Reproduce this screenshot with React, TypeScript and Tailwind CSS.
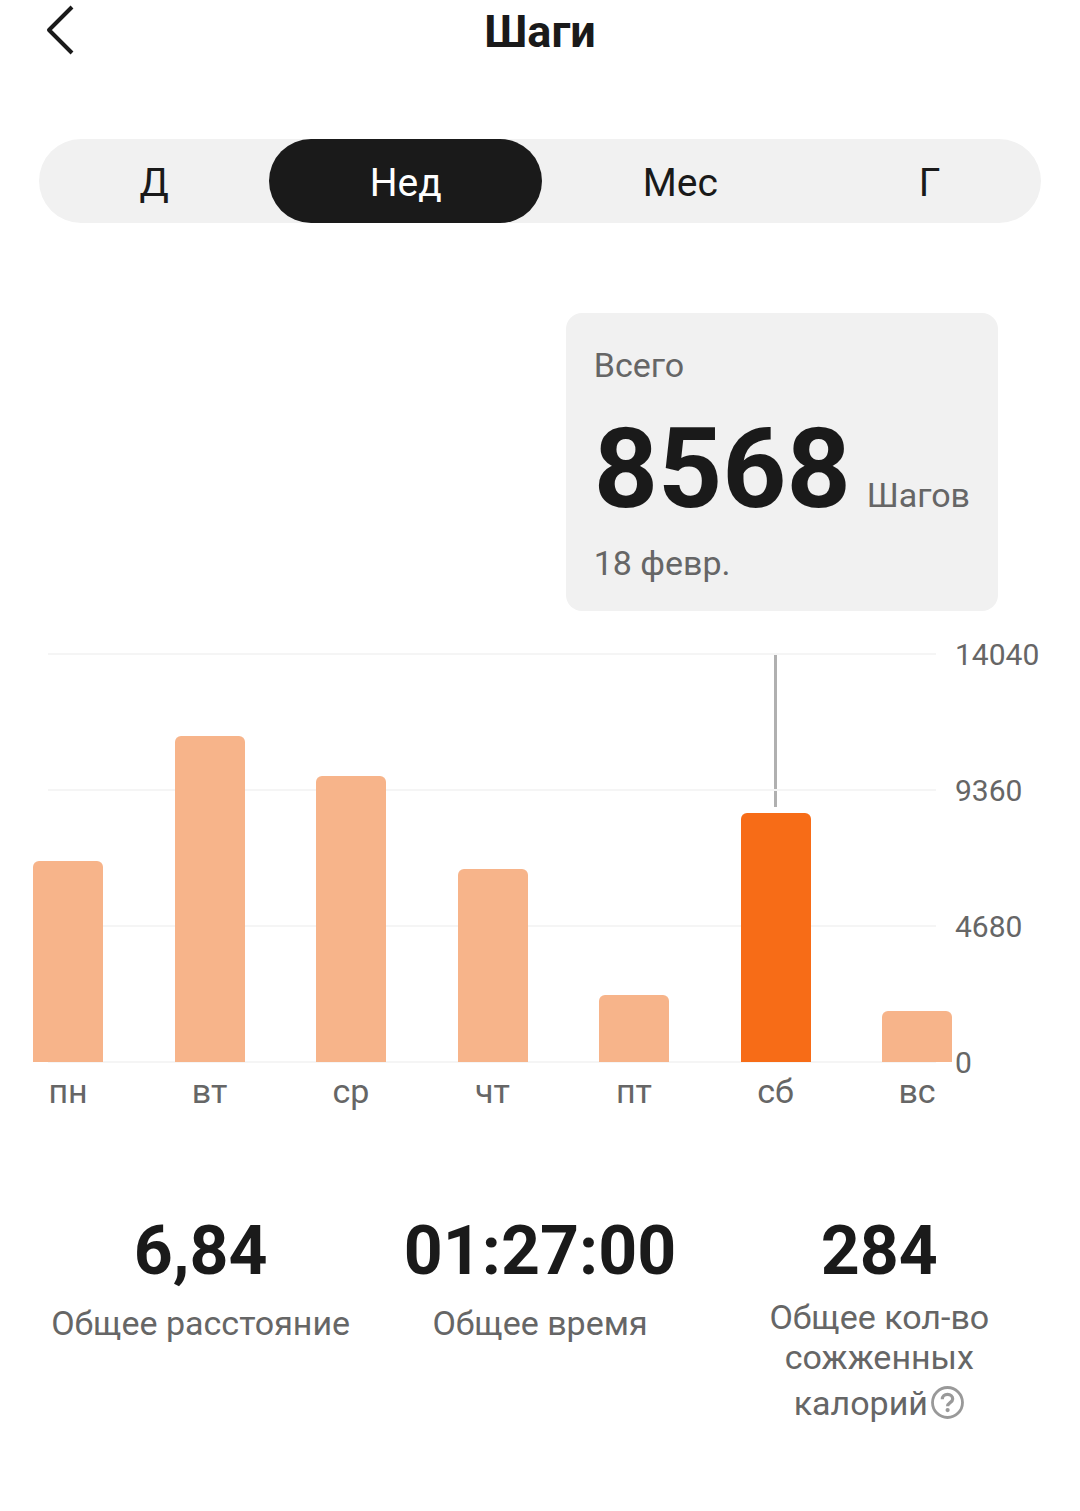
import { useState } from "react";

const MAX = 14040;
const axis = [14040, 9360, 4680, 0];
const tabs = ["Д", "Нед", "Мес", "Г"];

const days = [
  { label: "пн", steps: 6920 },
  { label: "вт", steps: 11220 },
  { label: "ср", steps: 9840 },
  { label: "чт", steps: 6640 },
  { label: "пт", steps: 2300 },
  { label: "сб", steps: 8568 },
  { label: "вс", steps: 1770 },
];

function Header() {
  return (
    <header className="grid h-16 grid-cols-[1fr_auto_1fr] items-center px-10">
      <button type="button" aria-label="Назад" className="h-[60px] w-10">
        <svg className="h-[60px] w-10" viewBox="0 0 40 60" fill="none" stroke="#1a1a1a" strokeWidth="4">
          <path d="M32 5 L9 28 L32 51" strokeLinejoin="round" />
        </svg>
      </button>
      <h1 className="text-[45px] leading-[60px] font-bold">Шаги</h1>
    </header>
  );
}

function Tabs() {
  const [active, setActive] = useState("Нед");

  return (
    <nav className="mx-[39px] mt-[75px] flex h-[84px] rounded-full bg-[#f1f1f1]">
      {tabs.map((tab) => (
        <button
          key={tab}
          type="button"
          onClick={() => setActive(tab)}
          className={
            tab === active
              ? "flex-auto rounded-full bg-[#1a1a1a] pt-1 text-[39px] leading-[48px] text-white"
              : "flex-auto rounded-full pt-1 text-[39px] leading-[48px]"
          }
        >
          {tab}
        </button>
      ))}
    </nav>
  );
}

function Chart({ selected, onSelect }: { selected: number; onSelect: (i: number) => void }) {
  return (
    <section className="mt-[26px] flex items-start pl-[33px]">
      <div className="flex-1 pt-[17px]">
        <div className="relative flex h-[408px] justify-between">
          <div className="absolute -top-px right-4 -bottom-px left-[15px] z-10 flex flex-col justify-between">
            {axis.map((v) => (
              <div key={v} className="h-[2px] bg-[#f5f5f5]" />
            ))}
          </div>
          {days.map((day, i) => (
            <button
              key={day.label}
              type="button"
              aria-label={`${day.label}: ${day.steps}`}
              onClick={() => onSelect(i)}
              className="flex w-[70px] flex-col items-center justify-end"
            >
              {i === selected && <span className="mb-[6px] w-[3px] flex-1 bg-[#b0b0b0]" />}
              <span
                className={
                  i === selected
                    ? "relative z-20 w-full rounded-t-md bg-[#f76c17]"
                    : "relative z-20 w-full rounded-t-md bg-[#f7b48a]"
                }
                style={{ height: `${(day.steps / MAX) * 100}%` }}
              />
            </button>
          ))}
        </div>
        <div className="mt-[9px] flex justify-between text-[34px] leading-10 text-[#666]">
          {days.map((day) => (
            <span key={day.label} className="w-[70px] text-center">{day.label}</span>
          ))}
        </div>
      </div>

      <div className="flex h-[444px] w-[128px] flex-col justify-between pl-[3px] text-[30px] leading-9 text-[#666]">
        {axis.map((v) => (
          <span key={v}>{v}</span>
        ))}
      </div>
    </section>
  );
}

export default function App() {
  const [selected, setSelected] = useState(5);

  return (
    <main className="min-h-screen bg-white pb-20 font-['Roboto',sans-serif] text-[#1a1a1a]">
      <Header />
      <Tabs />

      <section className="mt-[90px] mr-[82px] ml-auto w-fit rounded-2xl bg-[#f1f1f1] px-7 pt-8 pb-7 text-[34px] leading-10 text-[#666]">
        <p>Всего</p>
        <p className="mt-7 flex items-baseline gap-4">
          <strong className="text-[112px] leading-[112px] font-bold text-[#1a1a1a]">{days[selected].steps}</strong>
          <span>Шагов</span>
        </p>
        <p className="mt-[18px]">{13 + selected} февр.</p>
      </section>

      <Chart selected={selected} onSelect={setSelected} />

      <section className="mt-[100px] grid grid-cols-3 px-[31px] text-center text-[34px] leading-10 text-[#666]">
        <div>
          <p className="text-[68px] leading-[80px] font-bold text-[#1a1a1a]">6,84</p>
          <p className="mt-3">Общее расстояние</p>
        </div>
        <div>
          <p className="text-[68px] leading-[80px] font-bold text-[#1a1a1a]">01:27:00</p>
          <p className="mt-3">Общее время</p>
        </div>
        <div>
          <p className="text-[68px] leading-[80px] font-bold text-[#1a1a1a]">284</p>
          <p className="mt-[6px]">Общее кол-во<br />сожженных</p>
          <div className="mt-[6px] flex items-center justify-center gap-[3px]">
            <span>калорий</span>
            <button type="button" aria-label="Справка">
              <svg className="h-[34px] w-[34px]" viewBox="0 0 34 34" fill="none" stroke="#999">
                <circle cx="16.5" cy="16.5" r="15" strokeWidth="2.8" />
                <path d="M11.3 13.3c0-3 2.2-4.900 5.200-4.900s5.200 1.800 5.200 4.500c0 3.600-5.100 3.800-5.100 7.300" strokeWidth="3.2" />
                <circle cx="16.600" cy="24.100" r="2.1" fill="#999" stroke="none" />
              </svg>
            </button>
          </div>
        </div>
      </section>
    </main>
  );
}
